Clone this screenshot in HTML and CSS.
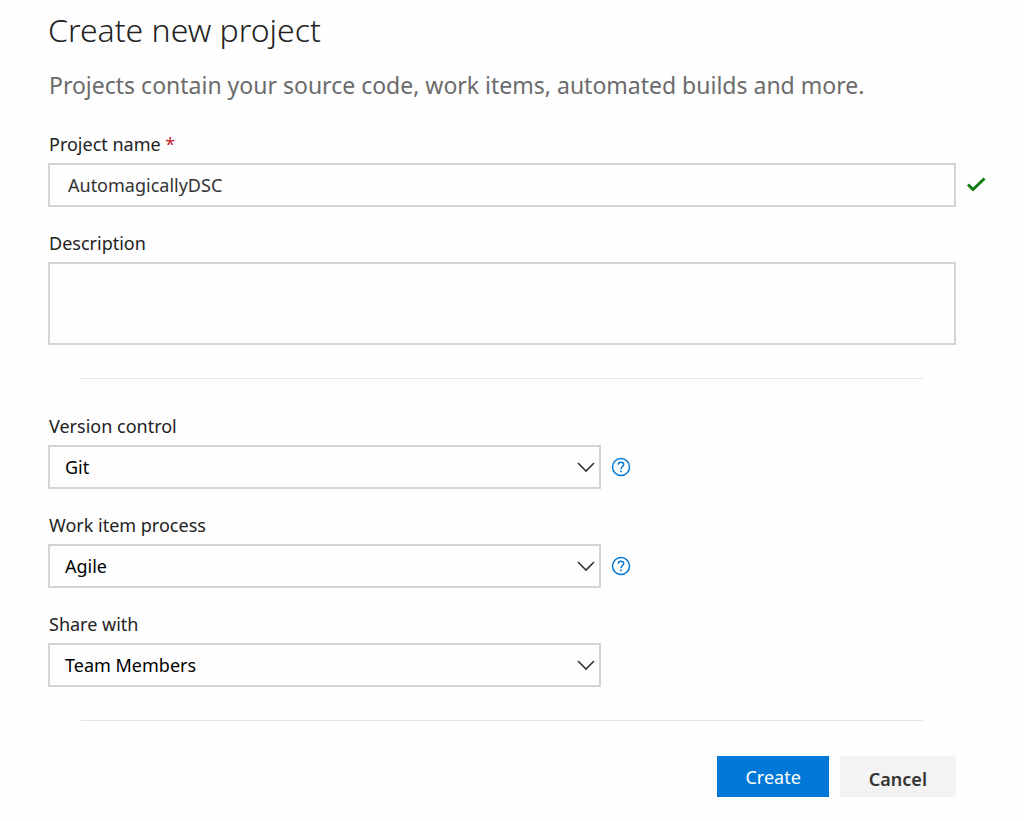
FILE: index.html
```html
<!DOCTYPE html>
<html lang="en">
<head>
<meta charset="utf-8">
<meta name="viewport" content="width=device-width, initial-scale=1">
<title>Create new project</title>
<link rel="stylesheet" href="styles.css">
</head>
<body>
<main class="page">
  <h1 class="title">Create new project</h1>
  <p class="subtitle">Projects contain your source code, work items, automated builds and more.</p>
  <form class="form">
    <div class="field">
      <label class="label" for="name">Project name <span class="required">*</span></label>
      <div class="row">
        <input class="control text-input" id="name" type="text" value="AutomagicallyDSC" required>
        <svg class="check" viewBox="0 0 20 20" role="img" aria-label="Valid"><path d="M2 9.500 7 14.500 18.500 3.500"/></svg>
      </div>
    </div>
    <div class="field">
      <label class="label" for="description">Description</label>
      <div class="row">
        <textarea class="control text-area" id="description"></textarea>
      </div>
    </div>
    <hr class="divider">
    <div class="field">
      <label class="label" for="version">Version control</label>
      <div class="row">
        <div class="picker">
          <select class="control select" id="version"><option>Git</option></select>
          <svg class="chevron" viewBox="0 0 18 12" aria-hidden="true"><path d="M1 2 9 10 17 2"/></svg>
        </div>
        <button class="help" type="button" aria-label="About version control">
          <svg class="help-icon" viewBox="0 0 20 20" aria-hidden="true"><circle cx="10" cy="10" r="8.500"/><path d="M7.300 7.800C7.300 6.200 8.500 5.200 10 5.200S12.700 6.200 12.700 7.600C12.700 9.500 10 9.700 10 12.200M10 13.600V15.200"/></svg>
        </button>
      </div>
    </div>
    <div class="field">
      <label class="label" for="process">Work item process</label>
      <div class="row">
        <div class="picker">
          <select class="control select" id="process"><option>Agile</option></select>
          <svg class="chevron" viewBox="0 0 18 12" aria-hidden="true"><path d="M1 2 9 10 17 2"/></svg>
        </div>
        <button class="help" type="button" aria-label="About work item process">
          <svg class="help-icon" viewBox="0 0 20 20" aria-hidden="true"><circle cx="10" cy="10" r="8.500"/><path d="M7.300 7.800C7.300 6.200 8.500 5.200 10 5.200S12.700 6.200 12.700 7.600C12.700 9.500 10 9.700 10 12.200M10 13.600V15.200"/></svg>
        </button>
      </div>
    </div>
    <div class="field">
      <label class="label" for="share">Share with</label>
      <div class="row">
        <div class="picker">
          <select class="control select" id="share"><option>Team Members</option></select>
          <svg class="chevron" viewBox="0 0 18 12" aria-hidden="true"><path d="M1 2 9 10 17 2"/></svg>
        </div>
      </div>
    </div>
    <hr class="divider">
    <div class="actions">
      <button class="button primary" type="submit">Create</button>
      <button class="button secondary" type="button">Cancel</button>
    </div>
  </form>
</main>
</body>
</html>
```

FILE: styles.css
```css
* {
  box-sizing: border-box;
}

body {
  margin: 0;
  background: #fefefe;
  color: #222;
  font-family: "Segoe UI", "Noto Sans", "Open Sans", sans-serif;
  font-size: 18px;
  line-height: 24px;
}

.page {
  padding: 10px 30px 24px 48px;
}

.title {
  margin: 0 0 15px;
  font-size: 32px;
  font-weight: 300;
  line-height: 40px;
}

.subtitle {
  margin: 0 0 27px;
  color: #6b6b6b;
  font-size: 23px;
  line-height: 40px;
}

.subtitle,
.label {
  padding-left: 1px;
}

.form {
  display: flex;
  flex-direction: column;
  gap: 24px;
}

.field {
  display: flex;
  flex-direction: column;
  gap: 7px;
}

.required {
  color: #c4262e;
}

.row {
  display: grid;
  grid-template-columns: 1fr 28px;
  align-items: center;
  column-gap: 10px;
}

.control {
  display: block;
  width: 100%;
  margin: 0;
  border: 2px solid #d4d4d4;
  border-radius: 0;
  background: #fefefe;
  font: inherit;
}

.text-input {
  height: 44px;
  padding: 0 18px;
  color: #333;
}

.text-area {
  height: 83px;
  padding: 8px 18px;
  color: #333;
  resize: none;
}

.check {
  width: 20px;
  height: 20px;
  fill: none;
  stroke: #107c10;
  stroke-width: 3;
}

.divider {
  align-self: stretch;
  height: 1px;
  margin: 9px 71px 11px 33px;
  border: 0;
  background: #e4e4e4;
}

.picker {
  position: relative;
}

.row:has(.picker) {
  grid-template-columns: 58.5% 20px;
}

.select {
  height: 44px;
  padding: 0 40px 0 15px;
  color: #000;
  appearance: none;
}

.chevron {
  position: absolute;
  top: 16px;
  right: 6px;
  width: 18px;
  height: 12px;
  fill: none;
  stroke: #333;
  stroke-width: 1.6;
  pointer-events: none;
}

.help {
  display: flex;
  padding: 0;
  border: 0;
  background: none;
}

.help-icon {
  width: 20px;
  height: 20px;
  fill: none;
  stroke: #0078d7;
  stroke-width: 1.5;
}

.actions {
  display: flex;
  justify-content: flex-end;
  gap: 11px;
  margin-right: 38px;
}

.button {
  height: 41px;
  padding: 0 28px;
  border: 0;
  font: inherit;
}

.primary {
  background: #0078d7;
  color: #fff;
}

.secondary {
  padding: 4px 29px 0;
  background: #f3f3f3;
  color: #333;
  font-weight: 600;
}
```
